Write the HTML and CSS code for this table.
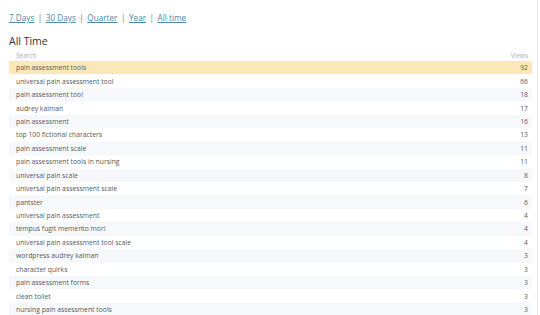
FILE: index.html
```html
<!DOCTYPE html>
<html>
<head>
<meta charset="utf-8">
<link rel="stylesheet" href="styles.css">
</head>
<body>
<div class="page">
  <nav class="periods">
    <a href="#">7 Days</a><span class="sep">|</span><a href="#">30 Days</a><span class="sep">|</span><a href="#">Quarter</a><span class="sep">|</span><a href="#">Year</a><span class="sep">|</span><a href="#">All time</a>
  </nav>
  <h2 class="title">All Time</h2>
  <table class="stats">
    <thead>
      <tr><th class="term">Search</th><th class="views">Views</th></tr>
    </thead>
    <tbody>
      <tr class="top"><td>pain assessment tools</td><td class="num">92</td></tr>
      <tr><td>universal pain assessment tool</td><td class="num">66</td></tr>
      <tr><td>pain assessment tool</td><td class="num">18</td></tr>
      <tr><td>audrey kalman</td><td class="num">17</td></tr>
      <tr><td>pain assessment</td><td class="num">16</td></tr>
      <tr><td>top 100 fictional characters</td><td class="num">13</td></tr>
      <tr><td>pain assessment scale</td><td class="num">11</td></tr>
      <tr><td>pain assessment tools in nursing</td><td class="num">11</td></tr>
      <tr><td>universal pain scale</td><td class="num">8</td></tr>
      <tr><td>universal pain assessment scale</td><td class="num">7</td></tr>
      <tr><td>pantster</td><td class="num">6</td></tr>
      <tr><td>universal pain assessment</td><td class="num">4</td></tr>
      <tr><td>tempus fugit memento mori</td><td class="num">4</td></tr>
      <tr><td>universal pain assessment tool scale</td><td class="num">4</td></tr>
      <tr><td>wordpress audrey kalman</td><td class="num">3</td></tr>
      <tr><td>character quirks</td><td class="num">3</td></tr>
      <tr><td>pain assessment forms</td><td class="num">3</td></tr>
      <tr><td>clean toilet</td><td class="num">3</td></tr>
      <tr><td>nursing pain assessment tools</td><td class="num">3</td></tr>
    </tbody>
  </table>
</div>
</body>
</html>
```

FILE: styles.css
```css
html, body {
  margin: 0;
  padding: 0;
  background: #ffffff;
  overflow: hidden;
}
body {
  font-family: "Open Sans", "DejaVu Sans", sans-serif;
  color: #444;
}
.page {
  width: 538px;
  height: 315px;
  border-right: 1px solid #e6e6e6;
  box-sizing: border-box;
  padding: 10px 8px 0 9px;
}
.periods {
  font-size: 8.2px;
  line-height: 15px;
  color: #888;
  white-space: nowrap;
}
.periods a {
  color: #4d8aa5;
  text-decoration: underline;
}
.periods .sep {
  margin: 0 3.5px;
  color: #777;
}
.title {
  margin: 9px 0 0 0;
  font-size: 10.5px;
  font-weight: normal;
  line-height: 14px;
  color: #333;
}
.stats {
  width: 523px;
  border-collapse: collapse;
  font-size: 6.8px;
  margin-top: 1.5px;
}
.stats th {
  font-weight: normal;
  color: #b0b0b0;
  height: 11.5px;
  line-height: 11px;
  padding: 0 7px;
  text-align: left;
  font-size: 6.5px;
}
.stats th.views {
  text-align: right;
  padding-right: 4px;
}
.stats td {
  height: 13.45px;
  line-height: 13px;
  padding: 0 7px;
  color: #5a5a5a;
}
.stats td.num {
  text-align: right;
  padding-right: 4px;
}
.stats tbody tr:nth-child(odd) {
  background: #f6f8fb;
}
.stats tbody tr.top {
  background: #fbe8b9;
}
```
